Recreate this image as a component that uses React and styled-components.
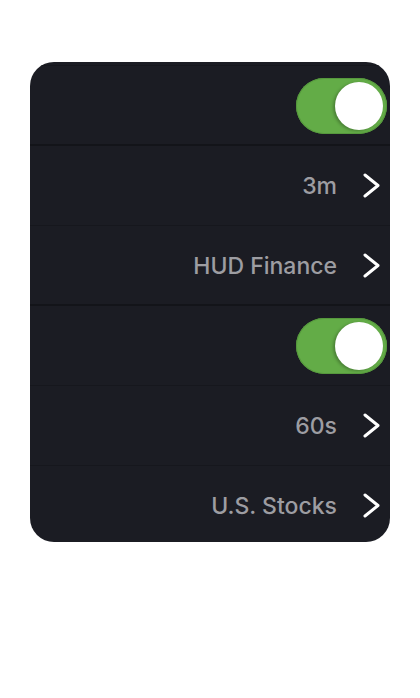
import React from 'react';
import styled, {createGlobalStyle} from 'styled-components';

const GlobalStyle = createGlobalStyle`
  body {
    margin: 0;
    background: #ffffff;
    font-family: Inter, "Liberation Sans", Arial, sans-serif;
  }
`;

const Page = styled.div`
  padding: 62px 30px;
`;

const Card = styled.div`
  display: flex;
  flex-direction: column;
  height: 480px;
  background: #1b1c23;
  border-radius: 24px;
  overflow: hidden;
`;

const TopStrip = styled.div`
  flex: 0 0 4px;
  box-sizing: border-box;
  border-bottom: 1px solid #16171d;
`;

const Row = styled.div`
  flex: 0 0 80px;
  box-sizing: border-box;
  display: flex;
  align-items: center;
  justify-content: flex-end;
  padding-right: ${props => (props.toggle ? '3px' : '10px')};
  padding-top: ${props => (props.strong ? '1px' : '0')};
  border-bottom: ${props => (props.strong ? '2px solid #131419' : '1px solid #16171d')};
`;

const Value = styled.span`
  font-size: 23px;
  font-weight: 500;
  color: #9d9da2;
  margin-right: 26px;
`;

const Track = styled.div`
  position: relative;
  width: 91px;
  height: 56px;
  border-radius: 28px;
  background: #63ac47;
  box-shadow: inset 0 0 0 1px #56983d;
`;

const Knob = styled.div`
  position: absolute;
  top: 4px;
  right: 4px;
  width: 48px;
  height: 48px;
  border-radius: 50%;
  background: #ffffff;
  box-shadow: -2px 1px 3px rgba(0, 0, 0, 0.25);
`;

const Chevron = () => (
    <svg width="17" height="25" viewBox="0 0 17 25">
        <polyline points="2,2 15,12.5 2,23" fill="none" stroke="#ffffff" strokeWidth="3"
                  strokeLinecap="round" strokeLinejoin="round"/>
    </svg>
);

const Toggle = () => (
    <Track>
        <Knob/>
    </Track>
);

const rows = [
    {type: 'toggle', strong: true},
    {type: 'link', value: '3m'},
    {type: 'link', value: 'HUD Finance', strong: true},
    {type: 'toggle'},
    {type: 'link', value: '60s'},
    {type: 'link', value: 'U.S. Stocks'},
];

const App = () => {
    return (
        <Page>
            <GlobalStyle/>
            <Card>
                <TopStrip/>
                {rows.map((row, i) => (
                    <Row key={i} toggle={row.type === 'toggle'} strong={row.strong}>
                        {row.type === 'toggle' ? <Toggle/> : (
                            <>
                                <Value>{row.value}</Value>
                                <Chevron/>
                            </>
                        )}
                    </Row>
                ))}
            </Card>
        </Page>
    );
};

export default App;
